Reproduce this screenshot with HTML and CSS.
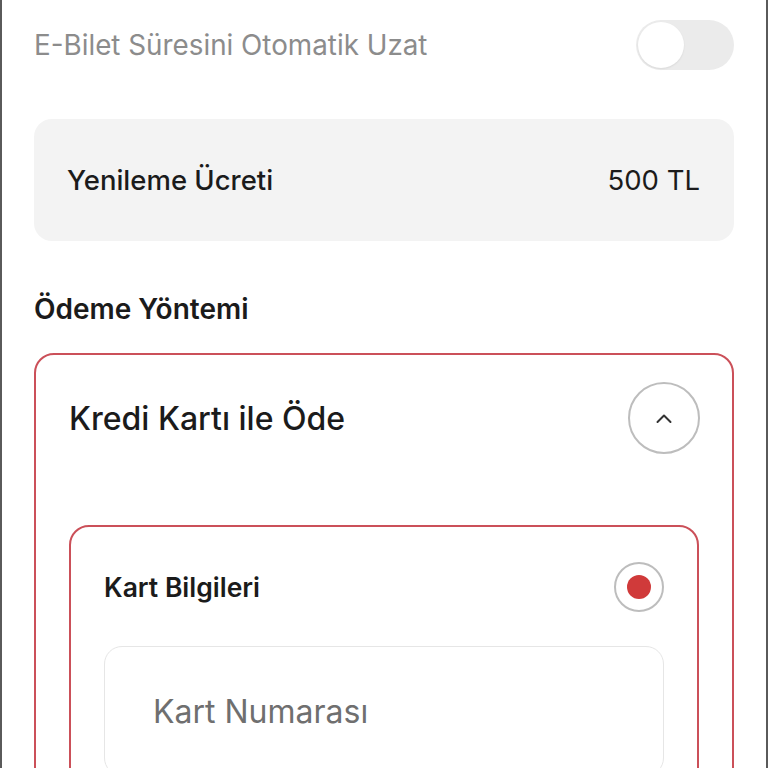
FILE: index.html
```html
<!DOCTYPE html>
<html lang="tr">

<head>
  <meta charset="UTF-8">
  <meta name="viewport" content="width=device-width, initial-scale=1.0">
  <title>E-Bilet Yenileme</title>
  <link rel="stylesheet" href="styles.css">
</head>

<body>
  <div class="page">
    <!-- otomatik uzatma -->
    <div class="auto-row">
      <span class="auto-label">E-Bilet Süresini Otomatik Uzat</span>
      <label class="toggle">
        <input type="checkbox">
        <span class="track"></span>
      </label>
    </div>

    <!-- ücret -->
    <div class="fee-box">
      <span>Yenileme Ücreti</span>
      <span class="fee-value">500 TL</span>
    </div>

    <h2 class="section-title">Ödeme Yöntemi</h2>

    <!-- kredi kartı -->
    <div class="method-card">
      <div class="method-head">
        <span class="method-title">Kredi Kartı ile Öde</span>
        <button class="collapse-btn" aria-label="Kapat">
          <svg width="22" height="14" viewBox="0 0 22 14">
            <path d="M4.5 11 L11 4.5 L17.5 11" fill="none" stroke="#333" stroke-width="2" stroke-linecap="round" stroke-linejoin="round" />
          </svg>
        </button>
      </div>

      <div class="card-info">
        <div class="card-info-head">
          <span class="card-info-title">Kart Bilgileri</span>
          <span class="radio"><span class="radio-dot"></span></span>
        </div>
        <div class="field">
          <input type="text" placeholder="Kart Numarası">
        </div>
      </div>
    </div>
  </div>
</body>

</html>
```

FILE: styles.css
```css
/* genel */
body {
  margin: 0;
  background-color: #fff;
  font-family: Inter, "Noto Sans", sans-serif;
  color: #1b1b1b;
}

.page {
  min-height: 768px;
  padding: 0 32px;
  border-left: 2px solid #5a5a5a;
  border-right: 2px solid #5a5a5a;
  box-sizing: border-box;
  overflow: hidden;
}

/* otomatik uzatma satırı */
.auto-row {
  display: flex;
  align-items: center;
  justify-content: space-between;
  height: 90px;
}

.auto-label {
  font-size: 27.8px;
  color: #8c8c8c;
}

.toggle {
  position: relative;
  display: inline-block;
  width: 98px;
  height: 50px;
}

.toggle input {
  opacity: 0;
  width: 0;
  height: 0;
}

.track {
  position: absolute;
  inset: 0;
  background-color: #ebebeb;
  border-radius: 25px;
}

.track:before {
  content: "";
  position: absolute;
  left: 2px;
  top: 2px;
  width: 46px;
  height: 46px;
  border-radius: 50%;
  background-color: #fff;
  box-shadow: 0 1px 2px rgba(0, 0, 0, 0.08);
}

/* ücret kutusu */
.fee-box {
  display: flex;
  justify-content: space-between;
  align-items: center;
  margin-top: 29px;
  height: 122px;
  padding: 0 34px 0 33px;
  background-color: #f3f3f3;
  border-radius: 18px;
  font-size: 27.5px;
  font-weight: 500;
}

.fee-value {
  font-weight: 400;
}

.section-title {
  margin: 51px 0 27px;
  font-size: 28px;
  font-weight: 600;
}

/* ödeme yöntemi kartı */
.method-card {
  border: 2px solid #cb5059;
  border-radius: 20px;
  padding: 0 33px 40px;
}

.method-head {
  display: flex;
  justify-content: space-between;
  align-items: center;
  height: 126px;
}

.method-title {
  font-size: 32px;
  font-weight: 500;
}

.collapse-btn {
  display: flex;
  align-items: center;
  justify-content: center;
  width: 72px;
  height: 72px;
  margin-right: -1px;
  border: 2px solid #bdbdbd;
  border-radius: 50%;
  background: #fff;
  padding: 0;
}

.card-info {
  margin-top: 44px;
  border: 2px solid #cb5059;
  border-radius: 20px;
  padding: 0 33px 30px;
}

.card-info-head {
  display: flex;
  justify-content: space-between;
  align-items: center;
  height: 119px;
}

.card-info-title {
  font-size: 26.5px;
  font-weight: 600;
}

.radio {
  display: flex;
  align-items: center;
  justify-content: center;
  width: 46px;
  height: 46px;
  border: 2px solid #bdbdbd;
  border-radius: 50%;
}

.radio-dot {
  width: 24px;
  height: 24px;
  border-radius: 50%;
  background-color: #d03a3a;
}

.field input {
  width: 100%;
  height: 130px;
  box-sizing: border-box;
  padding: 0 48px;
  border: 1px solid #e6e6e6;
  border-radius: 18px;
  font-family: inherit;
  font-size: 32px;
  color: #1b1b1b;
}

.field input::placeholder {
  color: #6f6f6f;
}
```
